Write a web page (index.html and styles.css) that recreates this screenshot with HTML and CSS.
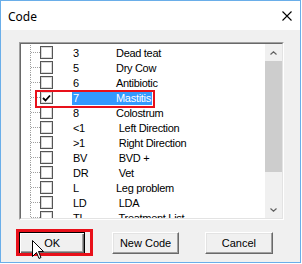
FILE: index.html
```html
<!DOCTYPE html>
<html lang="en">
<head>
    <meta charset="UTF-8">
    <title>Code</title>
    <link rel="stylesheet" href="styles.css">
</head>
<body>
    <div class="window">
        <div class="titlebar">
            <span class="title">Code</span>
            <svg class="close" width="10" height="10" viewBox="0 0 10 10">
                <path d="M0.5 0.5 L9.5 9.5 M9.5 0.5 L0.5 9.5" stroke="#000" stroke-width="1.1" fill="none"/>
            </svg>
        </div>
        <div class="client">
            <div class="listbox">
                <div class="listinner">
                    <ul class="tree">
                        <li><span class="branch"></span><span class="check"></span><span class="label"><span class="code">3</span><span class="desc">Dead teat</span></span></li>
                        <li><span class="branch"></span><span class="check"></span><span class="label"><span class="code">5</span><span class="desc">Dry Cow</span></span></li>
                        <li><span class="branch"></span><span class="check"></span><span class="label"><span class="code">6</span><span class="desc">Antibiotic</span></span></li>
                        <li><span class="branch"></span><span class="check checked"><svg width="9" height="8" viewBox="0 0 9 8"><path d="M1 4 L3.5 6.5 L8 1.5" stroke="#000" stroke-width="1.8" fill="none"/></svg></span><span class="label selected"><span class="code">7</span><span class="desc">Mastitis</span></span></li>
                        <li><span class="branch"></span><span class="check"></span><span class="label"><span class="code">8</span><span class="desc">Colostrum</span></span></li>
                        <li><span class="branch"></span><span class="check"></span><span class="label"><span class="code">&lt;1</span><span class="desc"> Left Direction</span></span></li>
                        <li><span class="branch"></span><span class="check"></span><span class="label"><span class="code">&gt;1</span><span class="desc"> Right Direction</span></span></li>
                        <li><span class="branch"></span><span class="check"></span><span class="label"><span class="code">BV</span><span class="desc"> BVD +</span></span></li>
                        <li><span class="branch"></span><span class="check"></span><span class="label"><span class="code">DR</span><span class="desc"> Vet</span></span></li>
                        <li><span class="branch"></span><span class="check"></span><span class="label"><span class="code">L</span><span class="desc">Leg problem</span></span></li>
                        <li><span class="branch"></span><span class="check"></span><span class="label"><span class="code">LD</span><span class="desc"> LDA</span></span></li>
                        <li><span class="branch"></span><span class="check"></span><span class="label"><span class="code">TL</span><span class="desc"> Treatment List</span></span></li>
                    </ul>
                    <div class="scrollbar">
                        <div class="arrow">
                            <svg width="7" height="4" viewBox="0 0 7 4"><path d="M0.5 3.5 L3.5 0.8 L6.5 3.5" stroke="#606060" stroke-width="1.2" fill="none"/></svg>
                        </div>
                        <div class="thumb"></div>
                        <div class="track"></div>
                        <div class="arrow">
                            <svg width="7" height="4" viewBox="0 0 7 4"><path d="M0.5 0.5 L3.5 3.2 L6.5 0.5" stroke="#606060" stroke-width="1.2" fill="none"/></svg>
                        </div>
                    </div>
                </div>
            </div>
            <div class="buttons">
                <button class="btn default">OK</button>
                <button class="btn">New Code</button>
                <button class="btn wide">Cancel</button>
            </div>
        </div>

        <!-- annotation marks drawn over the dialog -->
        <div class="mark mark-row"></div>
        <div class="mark mark-ok"></div>
        <svg class="cursor" width="13" height="21" viewBox="0 0 13 21">
            <path d="M0.5 0.5 L0.5 16.5 L4.5 12.5 L7 18.5 L9 17.5 L6.5 11.5 L11.5 11.5 Z" fill="#fff" stroke="#000" stroke-width="1"/>
        </svg>
    </div>
</body>
</html>
```

FILE: styles.css
```css
body {
    margin: 0;
    background-color: #fff;
    font-family: "Liberation Sans", Arial, sans-serif;
    font-size: 11px;
    color: #000;
}

.window {
    position: relative;
    width: 301px;
    height: 263px;
    box-sizing: border-box;
    border: 1px solid #6aaee9;
    background-color: #f0f0f0;
}

.titlebar {
    height: 29px;
    background-color: #fff;
    display: flex;
    align-items: center;
    justify-content: space-between;
    padding: 0 8px 0 7px;
}

.title {
    font-family: "Noto Sans", "Open Sans", sans-serif;
    font-size: 12px;
    margin-top: 1px;
}

.client {
    padding: 12px 0 0 18px;
}

.listbox {
    width: 265px;
    height: 178px;
    box-sizing: border-box;
    border: 1px solid;
    border-color: #a0a0a0 #fff #fff #a0a0a0;
}

.listinner {
    height: 100%;
    box-sizing: border-box;
    border: 1px solid;
    border-color: #696969 #e3e3e3 #e3e3e3 #696969;
    background-color: #fff;
    display: flex;
}

.tree {
    flex: 1;
    list-style: none;
    margin: 0;
    padding: 1px 0 0 0;
    overflow: hidden;
    letter-spacing: -0.3px;
}

.tree li {
    height: 15px;
    margin-left: 9px;
    border-left: 1px dotted #a0a0a0;
    display: flex;
    align-items: center;
}

.branch {
    width: 9px;
    border-top: 1px dotted #a0a0a0;
}

.check {
    width: 13px;
    height: 13px;
    box-sizing: border-box;
    border: 1px solid #555;
    box-shadow: inset 0 0 0 1px #d8d8d8;
    background-color: #fff;
    display: flex;
    align-items: center;
    justify-content: center;
}

.label {
    margin-left: 19px;
    padding: 0 1px 0 1px;
    height: 14px;
    line-height: 14px;
    display: flex;
}

.label.selected {
    background-color: #3399ff;
    color: #fff;
}

.code {
    width: 43px;
}

.desc {
    white-space: pre;
}

.scrollbar {
    width: 17px;
    background-color: #f0f0f0;
    display: flex;
    flex-direction: column;
}

.arrow {
    height: 17px;
    display: flex;
    align-items: center;
    justify-content: center;
}

.thumb {
    height: 111px;
    background-color: #cdcdcd;
}

.track {
    flex: 1;
}

.buttons {
    display: flex;
    margin-top: 12px;
}

.btn {
    width: 70px;
    height: 22px;
    margin-right: 27px;
    padding: 0;
    font-family: "Liberation Sans", Arial, sans-serif;
    font-size: 11px;
    color: #000;
    background-color: #f0f0f0;
    border: 1px solid;
    border-color: #fff #696969 #696969 #fff;
    box-shadow: inset -1px -1px #a0a0a0, inset 1px 1px #e3e3e3;
}

.btn.default {
    border: 1px solid #000;
    box-shadow: inset 1px 1px #fff, inset -1px -1px #696969, inset -2px -2px #a0a0a0;
}

.btn.wide {
    width: 72px;
    margin-left: -1px;
}

.mark {
    position: absolute;
    border: 2px solid #e8101a;
}

.mark-row {
    left: 34px;
    top: 89px;
    width: 116px;
    height: 14px;
}

.mark-ok {
    left: 15px;
    top: 228px;
    width: 71px;
    height: 21px;
    border-width: 3px;
}

.cursor {
    position: absolute;
    left: 31px;
    top: 239px;
}
```
